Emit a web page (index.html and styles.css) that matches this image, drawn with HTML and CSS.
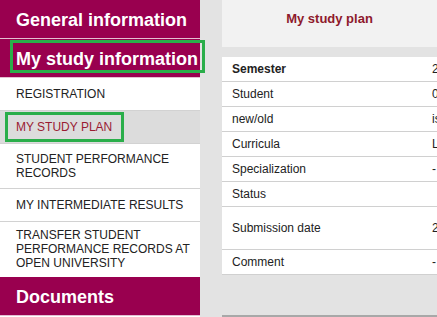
FILE: index.html
```html
<!DOCTYPE html>
<html lang="en">
<head>
  <meta charset="UTF-8">
  <title>My study plan</title>
  <meta name="viewport" content="width=device-width, initial-scale=1.0">
  <link rel="stylesheet" href="styles.css">
</head>
<body>
<div class="page">
  <aside class="sidebar">
    <h2 class="side-head">General information</h2>
    <h2 class="side-head"><span class="marked marked-head">My study information</span></h2>
    <ul class="side-menu">
      <li>REGISTRATION</li>
      <li class="active"><span class="marked marked-item">MY STUDY PLAN</span></li>
      <li>STUDENT PERFORMANCE<br>RECORDS</li>
      <li>MY INTERMEDIATE RESULTS</li>
      <li class="long">TRANSFER STUDENT<br>PERFORMANCE RECORDS AT<br>OPEN UNIVERSITY</li>
    </ul>
    <h2 class="side-head">Documents</h2>
  </aside>

  <main class="content">
    <div class="tabs">
      <div class="tab">My study plan</div>
    </div>

    <table class="plan">
      <tbody>
        <tr class="head-row"><td>Semester</td><td>2023-2024 spring</td></tr>
        <tr><td>Student</td><td>0123456</td></tr>
        <tr><td>new/old</td><td>is new</td></tr>
        <tr><td>Curricula</td><td>LT 6121</td></tr>
        <tr><td>Specialization</td><td>-</td></tr>
        <tr><td>Status</td><td></td></tr>
        <tr class="tall"><td>Submission date</td><td>2024-02-01</td></tr>
        <tr><td>Comment</td><td>-</td></tr>
      </tbody>
    </table>

    <div class="next-panel"></div>
  </main>
</div>
</body>
</html>
```

FILE: styles.css
```css
* {
  box-sizing: border-box;
}
html, body {
  margin: 0;
  height: 100%;
  overflow: hidden;
}
body {
  font-family: 'Liberation Sans', Arial, sans-serif;
  background: #e3e3e3;
  color: #222;
}
.page {
  display: grid;
  grid-template-columns: 200px 1fr;
  column-gap: 22px;
  min-height: 100%;
}
.sidebar {
  background: #fff;
}
.side-head {
  margin: 0;
  background: #99004f;
  color: #fff;
  font-size: 18px;
  font-weight: bold;
  line-height: 21px;
  padding: 10px 0 7px 16px;
  white-space: nowrap;
  border-bottom: 1px solid #e4bfd1;
}
.side-menu {
  list-style: none;
  margin: 0;
  padding: 0;
}
.side-menu li {
  display: flex;
  align-items: center;
  min-height: 33px;
  padding: 8px 0 8px 16px;
  font-size: 12px;
  line-height: 14px;
  white-space: nowrap;
  border-bottom: 1px solid #d2d2d2;
}
.side-menu li.active {
  background: #dcdcdc;
  color: #9a1b32;
}
.side-menu li.long {
  padding: 6px 0 7px 16px;
  border-bottom: 0;
}
.marked {
  position: relative;
  display: inline-block;
}
.marked::after {
  content: "";
  position: absolute;
  border: 3px solid #2aae4a;
}
.marked-head::after {
  top: -9px;
  bottom: -3px;
  left: -6px;
  right: -7px;
}
.marked-item::after {
  top: -8px;
  bottom: -8px;
  left: -11px;
  right: -12px;
}
.content {
  overflow: hidden;
}
.tabs {
  display: flex;
  height: 47px;
  background: #f2f2f2;
}
.tab {
  width: 246px;
  padding-top: 11px;
  text-align: center;
  font-size: 13px;
  font-weight: bold;
  line-height: 15px;
  color: #8e1a2c;
}
.plan {
  width: 420px;
  margin-top: 10px;
  border-collapse: collapse;
  background: #fff;
  font-size: 12px;
  line-height: 14px;
}
.plan td {
  padding: 5px 10px;
  border-bottom: 1px solid #d0d0d0;
  white-space: nowrap;
}
.plan td:first-child {
  width: 200px;
}
.plan .head-row td:first-child {
  font-weight: bold;
}
.plan .tall td {
  height: 43px;
}
.next-panel {
  margin-top: 40px;
  height: 20px;
  background: #efefef;
  border-top: 3px solid #a8a8a8;
}
```
